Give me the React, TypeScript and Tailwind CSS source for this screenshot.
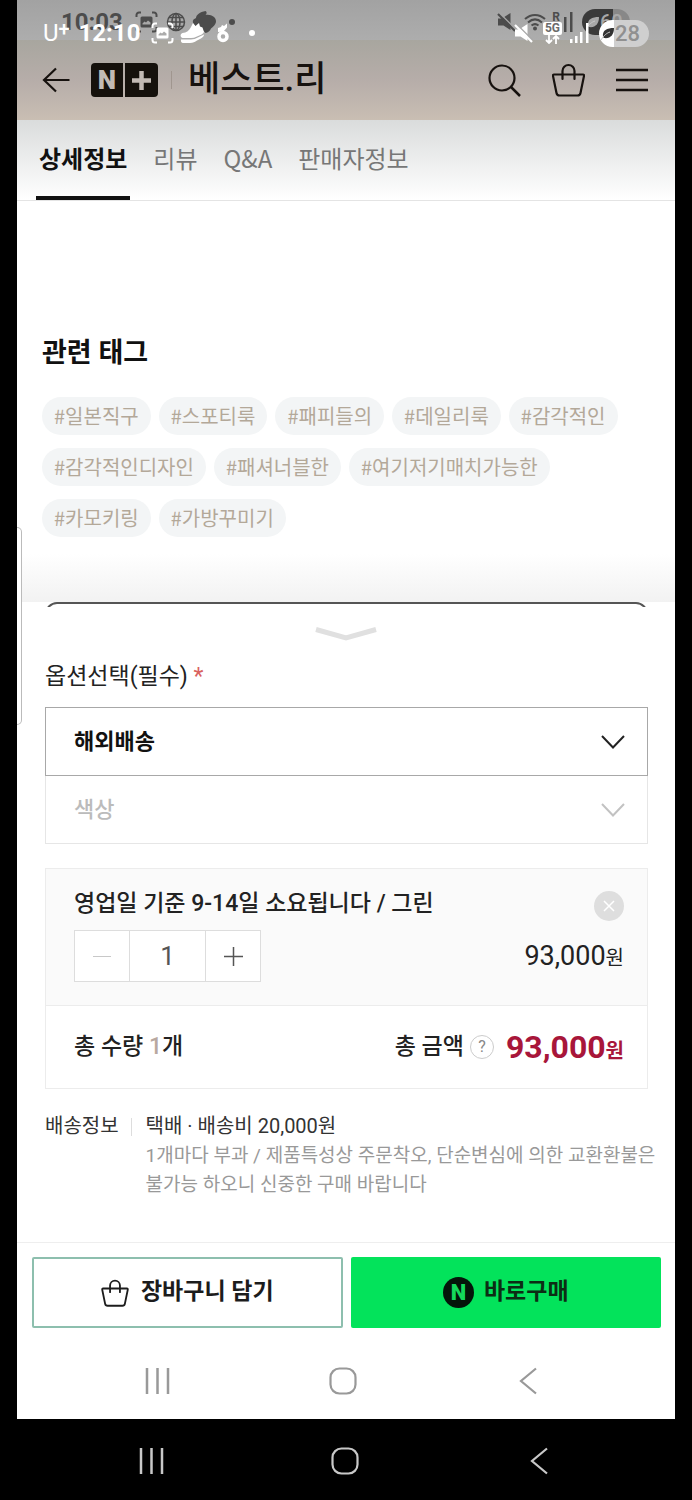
import { useState } from "react";

const tabs = ["상세정보", "리뷰", "Q&A", "판매자정보"];

const tags = [
  "#일본직구",
  "#스포티룩",
  "#패피들의",
  "#데일리룩",
  "#감각적인",
  "#감각적인디자인",
  "#패셔너블한",
  "#여기저기매치가능한",
  "#카모키링",
  "#가방꾸미기",
];

const UNIT_PRICE = 93000;

const CaptureIcon: React.FC = () => (
  <svg width="23" height="22" viewBox="0 0 23 22" fill="none">
    <path
      d="M1.500 6V4a2.500 2.500 0 0 1 2.500-2.500H6M17 1.500h2a2.500 2.500 0 0 1 2.500 2.500v2M21.500 16v2a2.500 2.500 0 0 1-2.500 2.500h-2M6 20.500H4A2.500 2.500 0 0 1 1.500 18v-2"
      stroke="currentColor"
      strokeWidth="2"
    />
    <path
      fillRule="evenodd"
      d="M7 5.500h9A1.500 1.500 0 0 1 17.500 7v8a1.500 1.500 0 0 1-1.500 1.500H7A1.500 1.500 0 0 1 5.500 15V7A1.500 1.500 0 0 1 7 5.500ZM7.500 13.500h8v-2L13 9.500l-2 2-1.500-1-2 2Z"
      fill="currentColor"
    />
  </svg>
);

const GlobeIcon: React.FC = () => (
  <svg width="20" height="20" viewBox="0 0 20 20" fill="none">
    <g stroke="currentColor" strokeWidth="1.500">
      <circle cx="10" cy="10" r="8.500" />
      <ellipse cx="10" cy="10" rx="4" ry="8.500" />
      <path d="M10 1.500v17M1.500 10h17M3 5.500h14M3 14.500h14" />
    </g>
  </svg>
);

const BlobIcon: React.FC = () => (
  <svg width="25" height="22" viewBox="0 0 25 22">
    <path
      d="M13.500 0c1.500 1 1.500 2.500 0 4C19 3 24.500 6 24 11c-.5 3-3 5-5 6.500-1 2.500-3 4-5.500 4.500-1.500-2-3-3-5-3.500C4 17 0 13 1 9.500 1.500 8 3 7.500 4 7c0-3 4-6 9.500-7Z"
      fill="currentColor"
    />
  </svg>
);

const MuteIcon: React.FC = () => (
  <svg width="19" height="21" viewBox="0 0 19 21">
    <path d="M1 6.500h4L13.500 1v17L6.500 13.500H1Z" fill="currentColor" />
    <path d="m2.500 1 16 16" stroke="#a8a8a8" strokeWidth="1.500" />
    <path d="m1 2 17 17" stroke="currentColor" strokeWidth="2.200" />
  </svg>
);

const WifiIcon: React.FC = () => (
  <svg width="22" height="18" viewBox="0 0 22 18" fill="none">
    <path
      d="M1 6c6-5.500 14-5.500 20 0M4 9.500c4.500-4 9.500-4 14 0M7.500 12.500c2.500-2 4.500-2 7 0"
      stroke="currentColor"
      strokeWidth="2"
    />
    <circle cx="11" cy="15.500" r="2" fill="currentColor" />
  </svg>
);

const ShoeIcon: React.FC = () => (
  <svg width="25" height="20" viewBox="0 0 25 20" fill="currentColor">
    <path d="M11 4 13 0l2.500 3L19 0l1 3.500 2.500 1L24 9c-1 2.500-4 3-7 4.500-2 1-4 1.500-6 1.500H2.500C0 14 0 11 2.500 10c4-.3 7-2.500 8.500-6Z" />
    <path d="M1 16.500h10c5 0 9-3.500 13-5 0 3-4 4.500-7 6-2 1.500-4 2.500-7 2.500H3c-1.500 0-2.500-1.500-2-3.500Z" />
  </svg>
);

const MedalIcon: React.FC = () => (
  <svg width="12" height="20" viewBox="0 0 12 20" fill="none">
    <circle cx="6" cy="13.500" r="4" stroke="currentColor" strokeWidth="3.500" />
    <path d="m1 5 3-1 1-2 2 1 3-2.500v4L6.500 8.500 1 9Z" fill="currentColor" />
  </svg>
);

const SignalIcon: React.FC = () => (
  <svg width="19" height="20" viewBox="0 0 19 20" fill="currentColor">
    <path d="M0 16h2.500v4H0ZM5 13h2.500v7H5ZM10 9h2.500v11H10ZM16 0h2.500v20H16Z" />
  </svg>
);

const LeafIcon: React.FC = () => (
  <svg width="14" height="15" viewBox="0 0 14 15" fill="none">
    <path d="M2 11C1 4 6 2 13 2c0 7-4 11-10 10Z" fill="currentColor" />
    <path d="M0 14C3 9 6 7 9 6" stroke="#c8c8c8" strokeWidth="1" />
  </svg>
);

const BasketIcon: React.FC<{ className?: string }> = ({ className }) => (
  <svg className={className} viewBox="0 0 33 34" fill="none">
    <path
      d="M2 11.500h29c.8 0 1.200.6 1 1.500l-3.500 17c-.3 1.500-1.500 2.500-3 2.500h-18c-1.500 0-2.700-1-3-2.500L1 13c-.2-.9.2-1.500 1-1.500Z"
      stroke="currentColor"
      strokeWidth="2.200"
    />
    <path
      d="M10.500 16V8a6 6 0 0 1 12 0v8"
      stroke="currentColor"
      strokeWidth="2.200"
      strokeLinecap="round"
    />
  </svg>
);

const ChevronIcon: React.FC = () => (
  <svg width="24" height="14" viewBox="0 0 24 14" fill="none">
    <path d="m1 1 11 11.500L23 1" stroke="currentColor" strokeWidth="2" />
  </svg>
);

const NavKeys: React.FC<{ className: string }> = ({ className }) => (
  <nav className={className}>
    <button aria-label="최근 앱" className="flex justify-center">
      <svg width="25" height="26" viewBox="0 0 25 26" stroke="currentColor" strokeWidth="2.500">
        <path d="M2 0v26M12.500 0v26M23 0v26" />
      </svg>
    </button>
    <button aria-label="홈" className="flex justify-center">
      <svg width="28" height="28" viewBox="0 0 28 28" fill="none">
        <rect x="1.500" y="1.500" width="25" height="25" rx="9" stroke="currentColor" strokeWidth="2.200" />
      </svg>
    </button>
    <button aria-label="뒤로" className="flex justify-center">
      <svg width="18" height="28" viewBox="0 0 18 28" fill="none">
        <path d="M17 1.500 2 14l15 12.500" stroke="currentColor" strokeWidth="2.200" />
      </svg>
    </button>
  </nav>
);

const InnerStatusBar: React.FC = () => (
  <div className="flex h-10 items-center justify-between bg-linear-to-b from-[#a2a2a2] to-[#adadad] pt-1 pr-[45px] pl-11 text-[#4c4c4c]">
    <div className="flex items-center">
      <span className="w-[74px] text-2xl font-bold">10:03</span>
      <CaptureIcon />
      <span className="ml-2">
        <GlobeIcon />
      </span>
      <span className="ml-1.5">
        <BlobIcon />
      </span>
      <span className="ml-3 size-[6px] rounded-full bg-current" />
    </div>
    <div className="flex items-center">
      <MuteIcon />
      <span className="ml-2">
        <WifiIcon />
      </span>
      <span className="ml-1.5 self-start text-xs font-bold">R</span>
      <svg className="ml-1" width="10" height="20" viewBox="0 0 10 20" fill="currentColor">
        <path d="M0 5h2.500v15H0ZM6 0h2.500v20H6Z" />
      </svg>
      <div className="ml-2 flex h-[26px] w-12 items-center overflow-hidden rounded-full bg-linear-to-r from-[#3a3a3a] from-65% to-[#888888] to-65% pl-1 text-[#a8a8a8]">
        <LeafIcon />
        <span className="text-xl font-medium">60</span>
      </div>
    </div>
  </div>
);

const DeviceStatusBar: React.FC = () => (
  <div className="absolute inset-x-0 top-0 flex h-[66px] items-center justify-between px-[43px] text-white">
    <div className="flex items-center">
      <span className="text-2xl leading-6">U</span>
      <span className="w-5 self-start text-xl leading-4 font-medium">+</span>
      <span className="w-[72px] text-2xl leading-6 font-bold">12:10</span>
      <CaptureIcon />
      <span className="ml-1.5">
        <ShoeIcon />
      </span>
      <span className="ml-3">
        <MedalIcon />
      </span>
      <span className="ml-5 size-[6px] rounded-full bg-current" />
    </div>
    <div className="flex items-center">
      <MuteIcon />
      <div className="ml-2.5 flex flex-col items-center">
        <span className="rounded-xs bg-white px-0.5 text-xs leading-[13px] font-bold text-[#6b6b6b]">
          5G
        </span>
        <svg width="15" height="9" viewBox="0 0 15 9" fill="none">
          <path
            d="M4 0v8M1 5l3 3 3-3M11 9V1M8 4l3-3 3 3"
            stroke="currentColor"
            strokeWidth="1.800"
          />
        </svg>
      </div>
      <span className="mr-2.5 ml-2">
        <SignalIcon />
      </span>
      <div className="flex h-[27px] w-[50px] items-center rounded-full bg-linear-to-r from-white from-30% to-[#cfcfcf] to-30% pl-0.5">
        <span className="text-[#333333]">
          <LeafIcon />
        </span>
        <span className="text-[22px] font-medium text-[#909090]">28</span>
      </div>
    </div>
  </div>
);

const ShopHeader: React.FC = () => (
  <header className="flex h-20 items-center justify-between bg-linear-to-b from-[#a8a69f] via-[#b6ada9] to-[#c9beb3] pr-[27px] pl-[25px] text-[#17120f]">
    <div className="flex items-center">
      <button aria-label="뒤로 가기">
        <svg width="28" height="26" viewBox="0 0 28 26" fill="none">
          <path d="M14 1.500 2 13l12 11.500M2 13h25.500" stroke="currentColor" strokeWidth="2.200" />
        </svg>
      </button>
      <a
        href="#"
        className="ml-[21px] flex h-[34px] overflow-hidden rounded-sm text-[26px] leading-[34px] font-black text-[#c2bab4]"
      >
        <span className="w-8 bg-[#15110c] text-center">N</span>
        <span className="ml-0.5 flex w-[33px] items-center justify-center bg-[#15110c]">
          <svg width="19" height="19" viewBox="0 0 19 19">
            <path d="M9.500 0v19M0 9.500h19" stroke="currentColor" strokeWidth="4.500" />
          </svg>
        </span>
      </a>
      <span className="ml-[13px] h-[18px] w-px bg-[#a0968f]" />
      <h1 className="ml-4 text-[35px] leading-10 font-medium">베스트.리</h1>
    </div>
    <div className="flex items-center gap-[31px]">
      <button aria-label="검색">
        <svg width="33" height="33" viewBox="0 0 33 33" fill="none">
          <circle cx="14" cy="14" r="12.500" stroke="currentColor" strokeWidth="2.200" />
          <path d="m23 23 9 9" stroke="currentColor" strokeWidth="2.500" />
        </svg>
      </button>
      <button aria-label="장바구니">
        <BasketIcon className="h-[34px] w-[33px]" />
      </button>
      <button aria-label="메뉴">
        <svg width="32" height="24" viewBox="0 0 32 24">
          <path d="M0 2h32M0 12h32M0 22h32" stroke="currentColor" strokeWidth="2.500" />
        </svg>
      </button>
    </div>
  </header>
);

const App: React.FC = () => {
  const [activeTab, setActiveTab] = useState(tabs[0]);
  const [quantity, setQuantity] = useState(1);
  const total = (UNIT_PRICE * quantity).toLocaleString("ko-KR");

  return (
    <div className="relative min-h-screen bg-black font-[Roboto,'Noto_Sans_CJK_KR',sans-serif]">
      <div className="relative mx-[17px] bg-white">
        <InnerStatusBar />
        <ShopHeader />

        {/* Tabs */}
        <div className="flex h-[81px] gap-5 border-b border-[#e4e4e4] bg-linear-to-b from-[#dadcdc] to-white pl-[19px] font-['Noto_Sans_CJK_KR',sans-serif]">
          {tabs.map((tab) => (
            <button
              key={tab}
              onClick={() => setActiveTab(tab)}
              className={
                tab === activeTab
                  ? "border-b-4 border-[#111111] px-[3px] text-2xl font-bold text-[#111111]"
                  : "border-b-4 border-transparent px-[3px] text-2xl text-[#777777]"
              }
            >
              {tab}
            </button>
          ))}
        </div>

        {/* Related tags */}
        <section className="px-[25px] pt-[132px]">
          <h2 className="text-[27px] leading-10 font-bold text-[#111111]">관련 태그</h2>
          <div className="mt-6 flex flex-wrap gap-x-2 gap-y-[13px] font-['Noto_Sans_CJK_KR',sans-serif]">
            {tags.map((tag) => (
              <a
                key={tag}
                href="#"
                className="rounded-full bg-[#f3f5f6] px-3 text-xl leading-[38px] text-[#b3a899]"
              >
                {tag}
              </a>
            ))}
          </div>
        </section>

        {/* Option sheet */}
        <section>
          <div className="mt-[17px] h-12 bg-linear-to-b from-white to-[#f2f2f2]" />
          <div className="mr-[27px] ml-7 h-[5px] overflow-hidden">
            <div className="h-6 rounded-xl border-2 border-[#555555]" />
          </div>

          <div className="flex justify-center pt-5">
            <button aria-label="옵션 닫기">
              <svg width="62" height="14" viewBox="0 0 62 14" fill="none">
                <path d="M1 2.500 31 11 61 2.500" stroke="#e0e0e0" strokeWidth="5" />
              </svg>
            </button>
          </div>

          <div className="pr-[27px] pl-7">
            <label
              htmlFor="shipping"
              className="mt-5 block text-[23px] leading-8 text-[#222222]"
            >
              옵션선택(필수) <span className="text-[#d9625f]">*</span>
            </label>
            <div className="relative mt-3.5">
              <select
                id="shipping"
                className="block h-[69px] w-full appearance-none border border-[#a8a8a8] bg-white px-7 text-[22px] font-bold text-[#111111]"
              >
                <option>해외배송</option>
              </select>
              <span className="pointer-events-none absolute inset-y-0 right-[23px] flex items-center text-[#222222]">
                <ChevronIcon />
              </span>
            </div>
            <div className="relative">
              <select
                aria-label="색상"
                disabled
                className="block h-[68px] w-full appearance-none border border-t-0 border-[#e6e6e6] bg-white px-7 text-[22px] font-medium text-[#bbbbbb] opacity-100"
              >
                <option>색상</option>
              </select>
              <span className="pointer-events-none absolute inset-y-0 right-[23px] flex items-center text-[#c2c2c2]">
                <ChevronIcon />
              </span>
            </div>

            {/* Selected item */}
            <div className="mt-6 border border-[#ececec]">
              <div className="border-b border-[#ececec] bg-[#fafafa] pt-[18px] pr-[23px] pb-[23px] pl-7">
                <div className="flex items-start justify-between">
                  <p className="text-[23px] leading-[34px] font-medium text-[#222222]">
                    영업일 기준 9-14일 소요됩니다 / 그린
                  </p>
                  <button
                    aria-label="삭제"
                    className="mt-1 flex size-[30px] items-center justify-center rounded-full bg-[#dedede]"
                  >
                    <svg width="12" height="12" viewBox="0 0 12 12">
                      <path d="m1 1 10 10M11 1 1 11" stroke="#ffffff" strokeWidth="1.500" />
                    </svg>
                  </button>
                </div>
                <div className="mt-[9px] flex items-center justify-between">
                  <div className="flex h-[52px] border border-[#dddddd] bg-white">
                    <button
                      aria-label="수량 감소"
                      onClick={() => setQuantity(Math.max(1, quantity - 1))}
                      className="flex w-[54px] items-center justify-center"
                    >
                      <span className="h-px w-[18px] bg-[#c8c8c8]" />
                    </button>
                    <input
                      aria-label="수량"
                      value={quantity}
                      readOnly
                      className="w-[77px] border-x border-[#dddddd] text-center text-[26px] text-[#555555]"
                    />
                    <button
                      aria-label="수량 증가"
                      onClick={() => setQuantity(quantity + 1)}
                      className="flex w-[54px] items-center justify-center"
                    >
                      <svg width="19" height="19" viewBox="0 0 19 19">
                        <path d="M9.500 0v19M0 9.500h19" stroke="#555555" strokeWidth="1.500" />
                      </svg>
                    </button>
                  </div>
                  <p className="text-[27px] text-[#222222]">
                    {total}
                    <span className="text-xl">원</span>
                  </p>
                </div>
              </div>
              <div className="flex h-[82px] items-center justify-between pr-[23px] pl-7 text-[23px] font-medium text-[#222222]">
                <p>
                  총 수량 <span className="text-[#b8a8a0]">{quantity}</span>개
                </p>
                <div className="flex items-center">
                  <span>총 금액</span>
                  <button
                    aria-label="총 금액 안내"
                    className="ml-1.5 flex size-6 items-center justify-center rounded-full border border-[#cccccc] text-base font-normal text-[#888888]"
                  >
                    ?
                  </button>
                  <strong className="ml-3 text-[32px] leading-10 font-bold text-[#a8163a]">
                    {total}
                    <span className="text-xl">원</span>
                  </strong>
                </div>
              </div>
            </div>
          </div>

          {/* Delivery info */}
          <div className="mt-[23px] flex pr-4 pl-7">
            <span className="text-xl leading-[29px] text-[#333333]">배송정보</span>
            <span className="mt-1.5 ml-3 h-[18px] w-px bg-[#dddddd]" />
            <div className="ml-3.5 flex-1">
              <p className="text-xl leading-[29px] text-[#333333]">택배 · 배송비 20,000원</p>
              <p className="text-[19px] leading-[29px] text-[#999999]">
                1개마다 부과 / 제품특성상 주문착오, 단순변심에 의한 교환환불은 불가능 하오니 신중한
                구매 바랍니다
              </p>
            </div>
          </div>
        </section>

        {/* Purchase bar */}
        <div className="mt-[43px] grid grid-cols-2 gap-2 border-t border-[#eeeeee] pt-3.5 pr-3.5 pl-[15px] text-[23px] font-bold text-[#1c1c1c]">
          <button className="flex h-[71px] items-center justify-center rounded-xs border-2 border-[#8dbfae] bg-white">
            <BasketIcon className="mr-3 h-7 w-7" />
            장바구니 담기
          </button>
          <button className="flex h-[71px] items-center justify-center rounded-xs bg-[#03e35b] text-[#0c2d14]">
            <span className="mr-2.5 flex size-[31px] items-center justify-center rounded-full bg-[#04150a] text-[22px] font-black text-[#14d85c]">
              N
            </span>
            바로구매
          </button>
        </div>

        <NavKeys className="mt-[15px] grid h-19 grid-cols-3 items-center pr-[54px] pl-12 text-[#999999]" />

        {/* Edge panel handle */}
        <div className="absolute top-[527px] left-0 h-[198px] w-[5px] rounded-r-md border border-l-0 border-[#bbbbbb] bg-white" />
      </div>

      <NavKeys className="grid h-20 grid-cols-3 items-center pt-1 pr-14 pl-[54px] text-[#c8c8c8]" />
      <DeviceStatusBar />
    </div>
  );
};

export default App;
